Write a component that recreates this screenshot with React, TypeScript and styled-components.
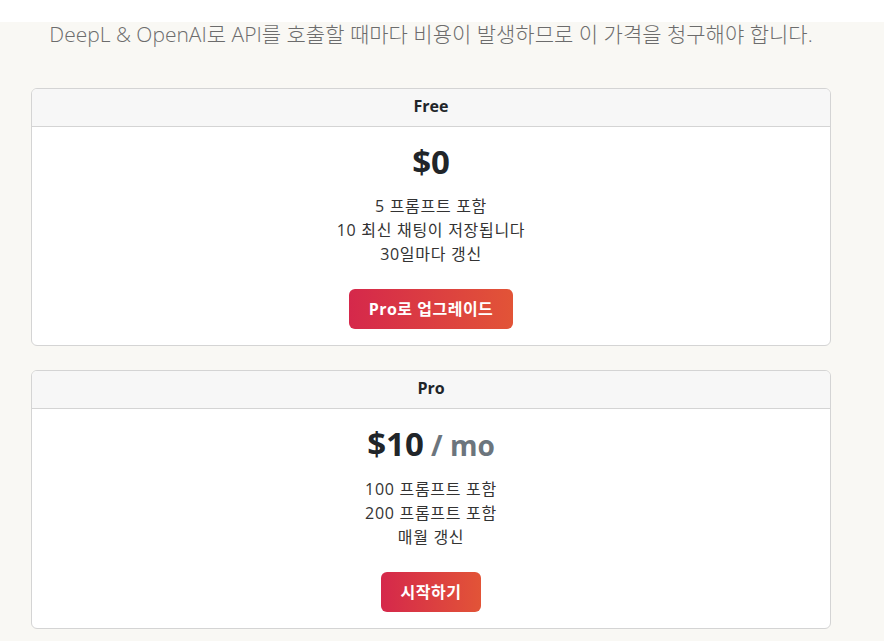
import styled, { createGlobalStyle } from 'styled-components';

const GlobalStyle = createGlobalStyle`
  html, body {
    margin: 0;
    padding: 0;
    background-color: #f9f8f4;
  }
  body {
    font-family: "Open Sans", "Noto Sans", "Noto Sans CJK KR", sans-serif;
    color: #212529;
  }
`;

const TopBar = styled.div`
  height: 22px;
  background-color: #fff;
`;

const Main = styled.main`
  width: 800px;
  padding-left: 31px;
`;

const Lead = styled.p`
  margin: 0 0 42px;
  text-align: center;
  font-size: 21px;
  font-weight: 300;
  line-height: 24px;
  color: #6c6c6c;
`;

const Card = styled.div`
  background-color: #fff;
  border: 1px solid #d4d4d4;
  border-radius: 6px;
  margin-bottom: 24px;
  overflow: hidden;
`;

const CardHeader = styled.div`
  background-color: #f7f7f7;
  border-bottom: 1px solid #d4d4d4;
  padding: 7px 16px 9px;
  text-align: center;
  font-size: 16px;
  font-weight: 700;
  line-height: 21px;
`;

const CardBody = styled.div`
  padding: 16px;
  text-align: center;
`;

const Price = styled.h1`
  margin: 0 0 13px;
  font-size: 33px;
  line-height: 38px;
  font-weight: 700;
  color: #212529;
`;

const Per = styled.small`
  font-size: 0.85em;
  color: #6c757d;
`;

const Features = styled.ul`
  list-style: none;
  margin: 0 0 23px;
  padding: 0;
  font-size: 16px;
  letter-spacing: 0.7px;
  line-height: 24px;
  color: #333;
`;

const GradientButton = styled.button`
  border: none;
  border-radius: 6px;
  padding: 8px 20px;
  font-family: inherit;
  font-size: 16px;
  letter-spacing: 0.5px;
  line-height: 24px;
  font-weight: 700;
  color: #fff;
  background: linear-gradient(90deg, #d5284b 0%, #e25437 100%);
  cursor: pointer;
`;

type Plan = {
  name: string;
  price: string;
  per?: string;
  features: string[];
  action: string;
};

const plans: Plan[] = [
  {
    name: 'Free',
    price: '$0',
    features: ['5 프롬프트 포함', '10 최신 채팅이 저장됩니다', '30일마다 갱신'],
    action: 'Pro로 업그레이드',
  },
  {
    name: 'Pro',
    price: '$10',
    per: '/ mo',
    features: ['100 프롬프트 포함', '200 프롬프트 포함', '매월 갱신'],
    action: '시작하기',
  },
];

const App = () => {
  return (
    <>
      <GlobalStyle />
      <TopBar />
      <Main>
        <Lead>DeepL &amp; OpenAI로 API를 호출할 때마다 비용이 발생하므로 이 가격을 청구해야 합니다.</Lead>
        {plans.map((plan) => (
          <Card key={plan.name}>
            <CardHeader>{plan.name}</CardHeader>
            <CardBody>
              <Price>
                {plan.price}
                {plan.per && <Per> {plan.per}</Per>}
              </Price>
              <Features>
                {plan.features.map((f) => (
                  <li key={f}>{f}</li>
                ))}
              </Features>
              <GradientButton type="button">{plan.action}</GradientButton>
            </CardBody>
          </Card>
        ))}
      </Main>
    </>
  );
};

export default App;
